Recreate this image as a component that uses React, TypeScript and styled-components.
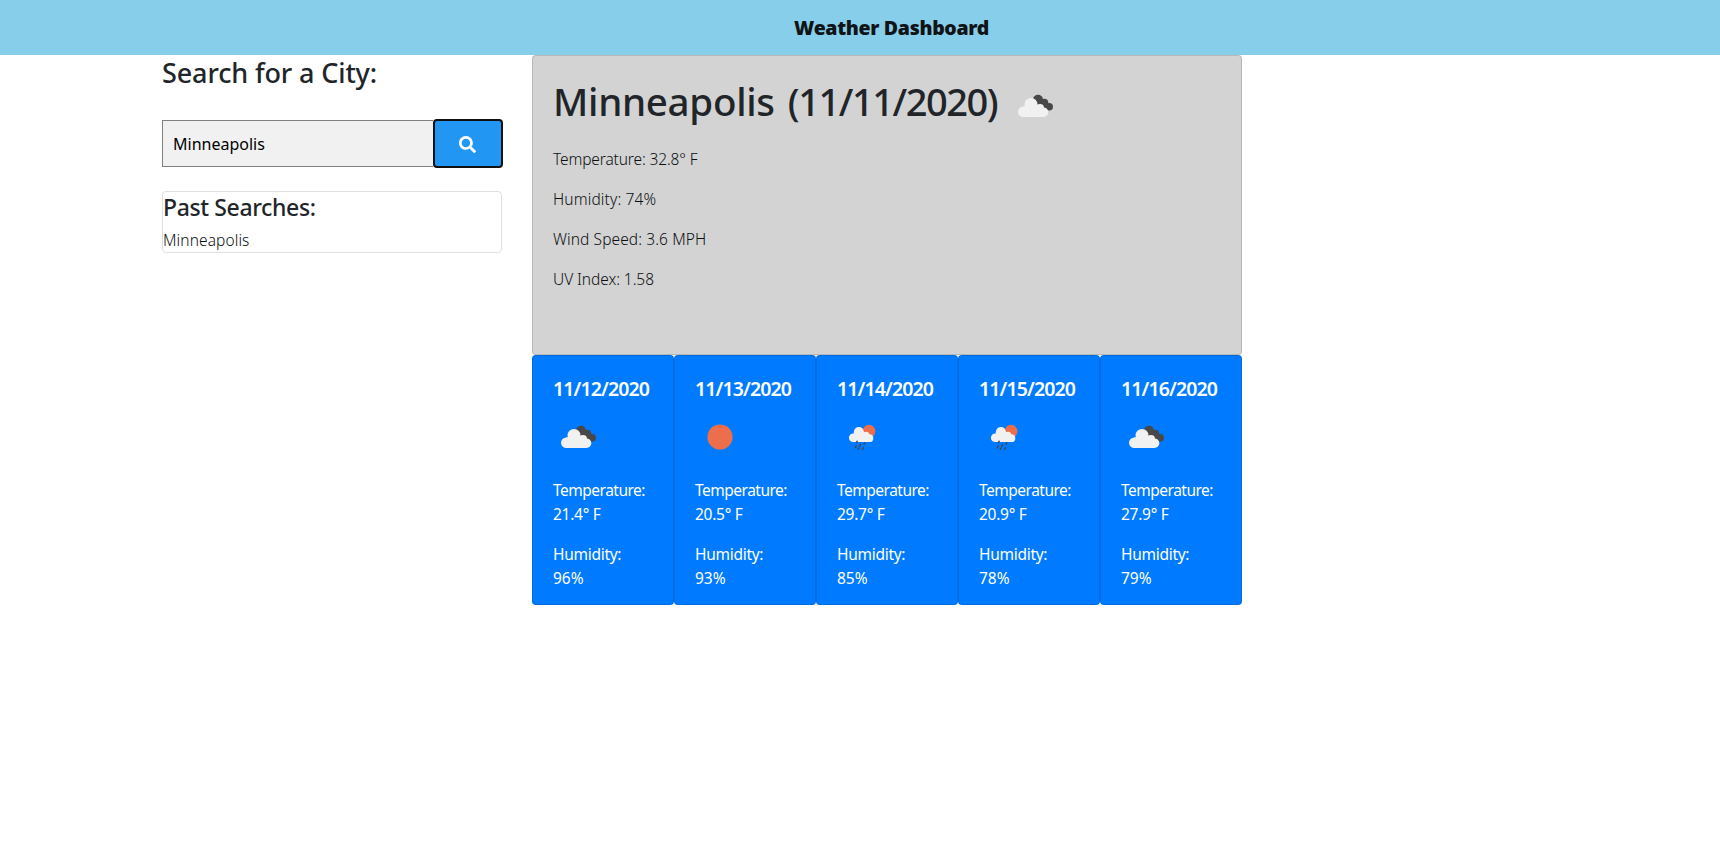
import React from "react";
import styled, { createGlobalStyle } from "styled-components";
import { FaSearch } from "react-icons/fa";

const GlobalStyle = createGlobalStyle`
  *, *::before, *::after { box-sizing: border-box; }
  body {
    margin: 0;
    background: #fff;
    color: #212529;
    font-family: "Noto Sans", "Open Sans", sans-serif;
    font-size: 15.5px;
    line-height: 24px;
  }
  h1, h2, h3, h4, h5, p { margin: 0; }
`;

const Header = styled.header`
  height: 55px;
  display: flex;
  align-items: center;
  justify-content: center;
  padding: 1px 0 0 63px;
  background: #87ceeb;
`;

const Brand = styled.h5`
  font-size: 19.5px;
  font-weight: 900;
  letter-spacing: -0.33px;
  color: #101416;
`;

const Layout = styled.main`
  display: flex;
  align-items: flex-start;
  gap: 30px;
  padding-left: 162px;
`;

const Sidebar = styled.aside`
  width: 340px;
  flex: none;
`;

const SearchTitle = styled.h3`
  font-size: 27px;
  font-weight: 500;
  line-height: 34px;
  letter-spacing: -0.13px;
  padding-top: 1px;
  margin-bottom: 30px;
`;

const SearchForm = styled.form`
  display: flex;
  height: 47px;
  margin-bottom: 24px;
`;

const SearchInput = styled.input`
  width: 270.5px;
  flex: none;
  height: 47px;
  padding: 0 10px;
  border: 1px solid #808080;
  border-right: none;
  border-radius: 0;
  background: #f1f1f1;
  color: #000;
  font: 400 16px "Noto Sans", sans-serif;
  outline: none;
`;

const SearchButton = styled.button`
  width: 70px;
  flex: none;
  height: 49px;
  margin: -1px -1px -1px 0.5px;
  padding: 1px 2px 0 0;
  display: flex;
  align-items: center;
  justify-content: center;
  border: 2px solid #101010;
  border-radius: 4px;
  background: #2196f3;
  color: #fff;
`;

const HistoryCard = styled.section`
  height: 62px;
  border: 1px solid rgba(0, 0, 0, 0.125);
  border-radius: 4px;
`;

const HistoryTitle = styled.h4`
  font-size: 23px;
  font-weight: 500;
  line-height: 29px;
  letter-spacing: -0.37px;
  padding-top: 1px;
  margin-bottom: 6px;
`;

const HistoryItem = styled.p`
  font-weight: 300;
  letter-spacing: 0.1px;
  color: #0c0f12;
`;

const Content = styled.div`
  width: 710px;
`;

const CurrentCard = styled.section`
  height: 300px;
  padding: 20px;
  border: 1px solid rgba(0, 0, 0, 0.125);
  border-radius: 4px;
  background: #d3d3d3;
`;

const CityRow = styled.div`
  display: flex;
  height: 50px;
  margin-bottom: 21px;

  svg {
    margin-top: 5px;
  }
`;

const CityName = styled.h1`
  display: flex;
  gap: 13px;
  width: 457px;
  font-size: 38.5px;
  font-weight: 500;
  line-height: 50px;
  white-space: nowrap;
`;

const City = styled.span`
  letter-spacing: -0.3px;
`;

const CityDate = styled.span`
  font-size: 38px;
  letter-spacing: -1.45px;
`;

const Reading = styled.p<{ $track: number }>`
  font-weight: 300;
  color: #0c0f12;
  letter-spacing: ${(p) => p.$track}px;
  margin-bottom: 16px;
`;

const Forecast = styled.section`
  display: grid;
  grid-template-columns: repeat(5, 142px);
`;

const DayCard = styled.article`
  height: 250px;
  padding: 20px;
  border: 1px solid rgba(0, 0, 0, 0.125);
  border-radius: 4px;
  background: #007bff;
  color: #fff;
`;

const DayDate = styled.h5`
  font-size: 19.5px;
  font-weight: 600;
  line-height: 24px;
  letter-spacing: -0.87px;
  padding-top: 1px;
  margin-bottom: 11px;
`;

const DayReading = styled.dl`
  margin: 16px 0 0;
`;

const Label = styled.dt<{ $track: number }>`
  letter-spacing: ${(p) => p.$track}px;
`;

const Value = styled.dd<{ $track: number }>`
  margin: 0;
  letter-spacing: ${(p) => p.$track}px;
`;

const Glyph = styled.svg`
  display: block;
  flex: none;
  width: 50px;
  height: 50px;
`;

const CloudsIcon = () => (
  <Glyph viewBox="0 0 50 50">
    <g fill="#484848">
      <circle cx="28" cy="18.7" r="5" />
      <circle cx="34.3" cy="21.7" r="4" />
      <circle cx="39.2" cy="25.7" r="3.8" />
      <path d="M27 19 L35 18 L41 28 L37 29.5 L28 25Z" />
    </g>
    <g fill="#f1f1f1">
      <circle cx="21" cy="23.4" r="6.5" />
      <circle cx="13.3" cy="30.7" r="5.3" />
      <circle cx="30" cy="27" r="4" />
      <circle cx="33.5" cy="31.2" r="4.8" />
      <path d="M13 25.5 L20 24 L30 25 L35 30 L33.5 36 H13.3Z" />
    </g>
  </Glyph>
);

const SunIcon = () => (
  <Glyph viewBox="0 0 50 50">
    <circle cx="25" cy="25" r="12.6" fill="#ec6e4c" />
  </Glyph>
);

const RainIcon = () => (
  <Glyph viewBox="0 0 50 50">
    <circle cx="32" cy="19.2" r="6.4" fill="#ec6e4c" />
    <g fill="#f1f1f1">
      <circle cx="21.9" cy="20.2" r="5.1" />
      <circle cx="16.2" cy="25.8" r="4.3" />
      <circle cx="29" cy="23" r="3.3" />
      <circle cx="32.4" cy="26.2" r="3.9" />
      <path d="M16 22 L21 20 L30 21 L33 25 L32.4 30.1 H16.2Z" />
    </g>
    <path
      d="M20.1 29.2l-.5 1.2M27.8 30.8l-.7 1.5M23.5 32.4l-.8 1.8M19.2 33.9l-.8 1.7M26.4 35.8l-.7 1.5M22 36l-.7 1.2"
      stroke="#484848"
      strokeWidth="1.5"
      strokeLinecap="round"
    />
  </Glyph>
);

const icons = { clouds: CloudsIcon, sun: SunIcon, rain: RainIcon };

const days: { date: string; icon: keyof typeof icons; temp: string; humidity: string }[] = [
  { date: "11/12/2020", icon: "clouds", temp: "21.4° F", humidity: "96%" },
  { date: "11/13/2020", icon: "sun", temp: "20.5° F", humidity: "93%" },
  { date: "11/14/2020", icon: "rain", temp: "29.7° F", humidity: "85%" },
  { date: "11/15/2020", icon: "rain", temp: "20.9° F", humidity: "78%" },
  { date: "11/16/2020", icon: "clouds", temp: "27.9° F", humidity: "79%" },
];

export default function App() {
  return (
    <>
      <GlobalStyle />
      <Header>
        <Brand>Weather Dashboard</Brand>
      </Header>
      <Layout>
        <Sidebar>
          <SearchTitle>Search for a City:</SearchTitle>
          <SearchForm onSubmit={(e) => e.preventDefault()}>
            <SearchInput type="text" defaultValue="Minneapolis" />
            <SearchButton type="submit" aria-label="Search">
              <FaSearch size={17} />
            </SearchButton>
          </SearchForm>
          <HistoryCard>
            <HistoryTitle>Past Searches:</HistoryTitle>
            <HistoryItem>Minneapolis</HistoryItem>
          </HistoryCard>
        </Sidebar>
        <Content>
          <CurrentCard>
            <CityRow>
              <CityName>
                <City>Minneapolis</City>
                <CityDate>(11/11/2020)</CityDate>
              </CityName>
              <CloudsIcon />
            </CityRow>
            <Reading $track={-0.13}>Temperature: 32.8° F</Reading>
            <Reading $track={0.13}>Humidity: 74%</Reading>
            <Reading $track={0.1}>Wind Speed: 3.6 MPH</Reading>
            <Reading $track={-0.06}>UV Index: 1.58</Reading>
          </CurrentCard>
          <Forecast>
            {days.map(({ date, icon, temp, humidity }) => {
              const Icon = icons[icon];
              return (
                <DayCard key={date}>
                  <DayDate>{date}</DayDate>
                  <Icon />
                  <DayReading>
                    <Label $track={-0.5}>Temperature:</Label>
                    <Value $track={-0.28}>{temp}</Value>
                  </DayReading>
                  <DayReading>
                    <Label $track={-0.28}>Humidity:</Label>
                    <Value $track={0}>{humidity}</Value>
                  </DayReading>
                </DayCard>
              );
            })}
          </Forecast>
        </Content>
      </Layout>
    </>
  );
}
